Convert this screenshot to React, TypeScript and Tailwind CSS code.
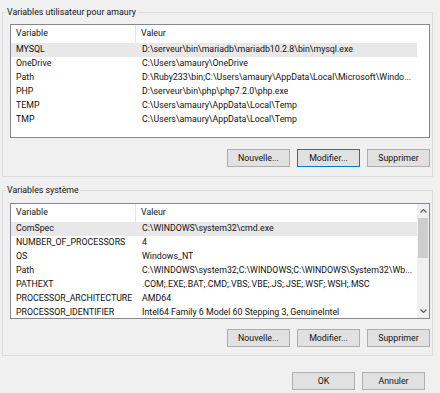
const userVars = [
  ["MYSQL", "D:\\serveur\\bin\\mariadb\\mariadb10.2.8\\bin\\mysql.exe"],
  ["OneDrive", "C:\\Users\\amaury\\OneDrive"],
  ["Path", "D:\\Ruby233\\bin;C:\\Users\\amaury\\AppData\\Local\\Microsoft\\Windo..."],
  ["PHP", "D:\\serveur\\bin\\php\\php7.2.0\\php.exe"],
  ["TEMP", "C:\\Users\\amaury\\AppData\\Local\\Temp"],
  ["TMP", "C:\\Users\\amaury\\AppData\\Local\\Temp"],
];

const sysVars = [
  ["ComSpec", "C:\\WINDOWS\\system32\\cmd.exe"],
  ["NUMBER_OF_PROCESSORS", "4"],
  ["OS", "Windows_NT"],
  ["Path", "C:\\WINDOWS\\system32;C:\\WINDOWS;C:\\WINDOWS\\System32\\Wb..."],
  ["PATHEXT", ".COM;.EXE;.BAT;.CMD;.VBS;.VBE;.JS;.JSE;.WSF;.WSH;.MSC"],
  ["PROCESSOR_ARCHITECTURE", "AMD64"],
  ["PROCESSOR_IDENTIFIER", "Intel64 Family 6 Model 60 Stepping 3, GenuineIntel"],
];

function ScrollBar() {
  return (
    <div className="flex w-[12px] shrink-0 flex-col bg-[#f0f0f0]">
      <div className="flex h-[14px] items-center justify-center">
        <svg width="7" height="4" viewBox="0 0 7 4">
          <polyline points="0.5,3.5 3.5,0.5 6.5,3.5" fill="none" stroke="#606060" strokeWidth="1.2" />
        </svg>
      </div>
      <div className="mx-[1px] h-[40px] bg-[#cdcdcd]" />
      <div className="flex-1" />
      <div className="flex h-[14px] items-center justify-center">
        <svg width="7" height="4" viewBox="0 0 7 4">
          <polyline points="0.5,0.5 3.5,3.5 6.5,0.5" fill="none" stroke="#606060" strokeWidth="1.2" />
        </svg>
      </div>
    </div>
  );
}

function VarList({ rows, height, scroll }: { rows: string[][]; height: string; scroll?: boolean }) {
  return (
    <div className={`flex overflow-hidden border border-[#828790] bg-white ${height}`}>
      <div className="min-w-0 flex-1">
        <div className="flex h-[18px] w-[406px]">
          <div className="flex w-[125px] items-center border-r border-[#e5e5e5] pl-[5px]">Variable</div>
          <div className="flex items-center pl-[5px]">Valeur</div>
        </div>
        {rows.map(([name, value], i) => (
          <div key={name + i} className={`flex h-[14px] w-[406px] items-center ${i === 0 ? "bg-[#e8e8e8]" : ""}`}>
            <div className="w-[125px] shrink-0 overflow-hidden whitespace-nowrap pl-[5px]">{name}</div>
            <div className="overflow-hidden whitespace-nowrap pl-[6px]">{value}</div>
          </div>
        ))}
      </div>
      {scroll && <ScrollBar />}
    </div>
  );
}

function Btn({ label, focused }: { label: string; focused?: boolean }) {
  return (
    <button
      className={`h-[18px] w-[63px] border bg-[#e1e1e1] text-center leading-[16px] ${
        focused ? "border-[#0078d7]" : "border-[#adadad]"
      }`}
    >
      {label}
    </button>
  );
}

function Group({ title, children }: { title: string; children: React.ReactNode }) {
  return (
    <fieldset className="border border-[#dcdcdc]">
      <legend className="ml-[3px] px-[1px] leading-[16px]">{title}</legend>
      {children}
    </fieldset>
  );
}

export default function App() {
  return (
    <div className="h-[393px] w-[440px] overflow-hidden bg-[#f0f0f0] pl-[2px] pr-[7px] font-['Roboto',sans-serif] text-[8.8px] text-[#111]">
      <div className="mt-[4px]">
        <Group title="Variables utilisateur pour amaury">
          <div className="pb-[9px] pl-[7px] pr-[2px] pt-[4px]">
            <VarList rows={userVars} height="h-[114px]" />
            <div className="mt-[11px] flex justify-end gap-[7px]">
              <Btn label="Nouvelle..." />
              <Btn label="Modifier..." focused />
              <Btn label="Supprimer" />
            </div>
          </div>
        </Group>
      </div>
      <div className="mt-[5px]">
        <Group title="Variables système">
          <div className="pb-[8px] pl-[7px] pr-[2px] pt-[5px]">
            <VarList rows={sysVars} height="h-[116px]" scroll />
            <div className="mt-[10px] flex justify-end gap-[7px]">
              <Btn label="Nouvelle..." />
              <Btn label="Modifier..." />
              <Btn label="Supprimer" />
            </div>
          </div>
        </Group>
      </div>
      <div className="mt-[16px] flex justify-end gap-[7px] pr-[8px]">
        <Btn label="OK" />
        <Btn label="Annuler" />
      </div>
    </div>
  );
}
